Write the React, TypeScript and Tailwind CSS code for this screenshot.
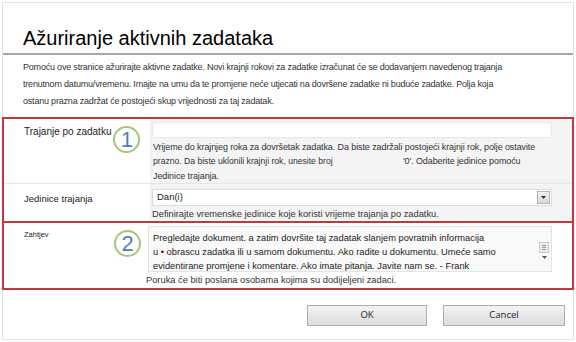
import React from 'react';

function Badge({ n }: { n: string }) {
  return (
    <div className="w-[27px] h-[27px] rounded-full border-2 border-[#a9c37a] flex items-center justify-center text-[22px] leading-none text-[#4f7fbd] bg-white">
      {n}
    </div>
  );
}

export default function App() {
  return (
    <div className="w-[576px] h-[342px] bg-white p-[2px] font-['Liberation_Sans',Arial,sans-serif] text-[#222]">
      <div className="h-[338px] border border-[#e2e2e2] flex flex-col">
        <h1 className="pl-[20px] pt-[24px] h-[50px] text-[20px] leading-[22px] text-black">Ažuriranje aktivnih zadataka</h1>
        <div className="h-[2px] bg-[#a3a8ad]" />
        <p className="pl-[20px] pr-4 pt-[4px] text-[9px] leading-[17px] text-[#333] h-[62px] tracking-[-0.2px]">
          Pomoću ove stranice ažurirajte aktivne zadatke. Novi krajnji rokovi za zadatke izračunat će se dodavanjem navedenog trajanja
          <br />
          trenutnom datumu/vremenu. Imajte na umu da te promjene neće utjecati na dovršene zadatke ni buduće zadatke. Polja koja
          <br />
          ostanu prazna zadržat će postojeći skup vrijednosti za taj zadatak.
        </p>

        {/* box 1 */}
        <div className="border-2 border-[#bd3a3c] mx-[-1px] h-[106px] flex flex-col">
          <div className="flex h-[66px] border-b border-[#e6e6e6]">
            <div className="w-[146px] flex pl-[20px] pt-[4px] gap-[2px]">
              <span className="text-[10px] leading-[14px] mt-[2px]">Trajanje po zadatku</span>
              <div className="mt-[3px]"><Badge n="1" /></div>
            </div>
            <div className="flex-1 bg-[#f4f4f4] pl-[2px] pr-[20px] pt-[3px]">
              <div className="h-[16px] bg-white border border-[#e8e8e8]" />
              <div className="pl-[1px] pt-[2px] text-[9px] leading-[14px] text-[#333] tracking-[-0.1px]">
                <div>Vrijeme do krajnjeg roka za dovršetak zadatka. Da biste zadržali postojeći krajnji rok, polje ostavite</div>
                <div className="flex items-baseline">
                  <span className="text-[8.6px] w-[250px] tracking-[0px]">prazno. Da biste uklonili krajnji rok, unesite broj</span>
                  <span>'0'. Odaberite jedinice pomoću</span>
                </div>
                <div className="mt-[1px]">Jedinice trajanja.</div>
              </div>
            </div>
          </div>
          <div className="flex flex-1">
            <div className="w-[146px] pl-[20px] pt-[8px] text-[9.5px] leading-[14px]">Jedinice trajanja</div>
            <div className="flex-1 bg-[#f4f4f4] pl-[2px] pr-[20px] pt-[5px]">
              <div className="h-[17px] bg-white border border-[#dcdcdc] flex items-center justify-between pl-[4px] pr-[1px]">
                <span className="text-[9.5px]">Dan(i)</span>
                <div className="w-[13px] h-[13px] border border-[#b5b5b5] bg-gradient-to-b from-[#f2f2f2] to-[#d8d8d8] flex items-center justify-center">
                  <svg width="5" height="3" viewBox="0 0 5 3"><path d="M0 0h5L2.5 3z" fill="#333" /></svg>
                </div>
              </div>
              <div className="pt-[2px] text-[9.3px] leading-[13px] text-[#333]">Definirajte vremenske jedinice koje koristi vrijeme trajanja po zadatku.</div>
            </div>
          </div>
        </div>

        {/* box 2 */}
        <div className="border-2 border-[#bd3a3c] mx-[-1px] mt-[-2px] h-[69px] flex">
          <div className="w-[144px] flex pl-[20px] pt-[6px]">
            <span className="text-[7.5px] leading-[12px] w-[90px]">Zahtjev</span>
            <div className="mt-[1px]"><Badge n="2" /></div>
          </div>
          <div className="flex-1 pr-[20px] pt-[3px] flex flex-col">
            <div className="h-[46px] border border-[#e4e4e4] bg-[#f9f9f9] flex">
              <div className="flex-1 pl-[4px] pt-[4px] text-[9.3px] leading-[14px] text-[#222]">
                <div>Pregledajte dokument. a zatim dovršite taj zadatak slanjem povratnih informacija</div>
                <div>u • obrascu zadatka ili u samom dokumentu. Ako radite u dokumentu. Umeće samo</div>
                <div>evidentirane promjene i komentare. Ako imate pitanja. Javite nam se. - Frank</div>
              </div>
              <div className="w-[14px] flex flex-col items-center pt-[15px] gap-[3px]">
                <div className="w-[10px] h-[11px] border border-[#c8c8c8] bg-[#ececec] flex flex-col items-center justify-center gap-[1px]">
                  <div className="w-[4px] h-px bg-[#999]" />
                  <div className="w-[4px] h-px bg-[#999]" />
                  <div className="w-[4px] h-px bg-[#999]" />
                </div>
                <svg width="5" height="3" viewBox="0 0 5 3"><path d="M0 0h5L2.5 3z" fill="#555" /></svg>
              </div>
            </div>
            <div className="pt-[2px] -ml-[2px] text-[9.3px] leading-[13px] text-[#333]">Poruka će biti poslana osobama kojima su dodijeljeni zadaci.</div>
          </div>
        </div>

        <div className="flex justify-end gap-[16px] pr-[8px] pt-[15px]">
          <button className="w-[120px] h-[21px] border border-[#adadad] bg-gradient-to-b from-[#f3f3f3] to-[#dcdcdc] text-[9.5px] text-[#222] font-['Open_Sans',sans-serif]">OK</button>
          <button className="w-[122px] h-[21px] border border-[#adadad] bg-gradient-to-b from-[#f3f3f3] to-[#dcdcdc] text-[9.5px] text-[#222] font-['Open_Sans',sans-serif]">Cancel</button>
        </div>
      </div>
    </div>
  );
}
